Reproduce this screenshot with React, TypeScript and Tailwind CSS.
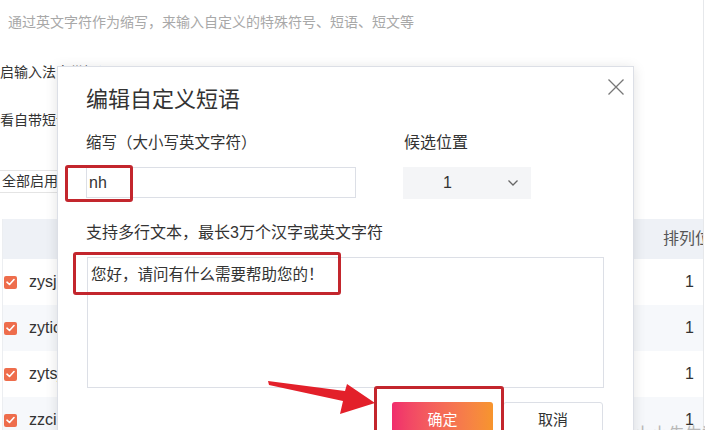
import React from 'react';

const rows = ['zysj', 'zytic', 'zytsj', 'zzci'];

const Check = () => (
  <span className="flex h-[13px] w-[13px] items-center justify-center rounded-[2px] bg-[#ee6d4c]">
    <svg width="9" height="8" viewBox="0 0 9 8" fill="none">
      <path d="M1 4.2 L3.5 6.5 L8 1.5" stroke="white" strokeWidth="1.6" strokeLinecap="round" strokeLinejoin="round" />
    </svg>
  </span>
);

export default function App() {
  return (
    <div
      className="relative h-[430px] w-[705px] overflow-hidden bg-white text-[#333]"
      style={{ fontFamily: '"Liberation Sans", "Noto Sans CJK SC", sans-serif' }}
    >
      {/* Page behind the dialog */}
      <div className="flex h-full w-[704px] flex-col border-r border-[#e6e8eb]">
        <p className="pl-[8px] pt-[13px] text-[14px] leading-[18px] text-[#a8a8a8]">
          通过英文字符作为缩写，来输入自定义的特殊符号、短语、短文等
        </p>
        <p className="mt-[31px] text-[14px] leading-[20px]">启输入法自带短语</p>
        <p className="mt-[28px] text-[14px] leading-[20px]">看自带短语</p>

        <div className="mt-[40px] flex h-[29px] w-[300px] items-center border-y border-[#e4e4e4] pl-[2px] text-[14px]">
          全部启用
        </div>

        {/* Table */}
        <div className="mt-[26px] ml-[2px] flex flex-col border-l border-[#eceef1]">
          <div className="flex h-[40px] items-center bg-[#eef1f6]">
            <div className="flex-1" />
            <div className="w-[40px] overflow-hidden whitespace-nowrap text-[16px] text-[#555]">排列位</div>
          </div>
          {rows.map((r, i) => (
            <div
              key={r}
              className={`flex h-[46px] items-center ${i % 2 === 1 ? 'bg-[#f6f8fb]' : 'bg-white'}`}
            >
              <div className="pl-[1px]">
                <Check />
              </div>
              <span className="ml-[12px] text-[16px]">{r}</span>
              <div className="flex-1" />
              <span className="pr-[9px] text-[16px]">1</span>
            </div>
          ))}
        </div>
      </div>

      {/* Watermark */}
      <div className="absolute left-[578px] top-[422px] whitespace-nowrap text-[17px] text-[#b8b8b8]">
        头条 @小小先生数码
      </div>

      {/* Dialog */}
      <div className="absolute left-[57px] top-[66px] h-[380px] w-[577px] border border-[#dcdfe6] bg-white shadow-[0_2px_12px_rgba(0,0,0,0.12)]">
        <button className="absolute right-[8px] top-[11px] text-[#777]">
          <svg width="18" height="18" viewBox="0 0 18 18" fill="none">
            <path d="M1.5 1.5 L16.5 16.5 M16.5 1.5 L1.5 16.5" stroke="currentColor" strokeWidth="1.3" />
          </svg>
        </button>

        <div className="flex flex-col pl-[28px] pr-[30px] pt-[17px]">
          <h2 className="text-[22px] leading-[32px] text-[#333]">编辑自定义短语</h2>

          <div className="mt-[16px] flex">
            <div className="flex w-[270px] flex-col">
              <label className="text-[15.5px] leading-[22px]">缩写（大小写英文字符）</label>
              <div className="mt-[13px] flex h-[31px] items-center border border-[#dcdfe6] pl-[2px] text-[16px]">
                nh
              </div>
            </div>
            <div className="ml-[47px] flex w-[128px] flex-col">
              <label className="pl-[1px] text-[16px] leading-[22px]">候选位置</label>
              <div className="mt-[13px] flex h-[32px] items-center bg-[#f4f5f7]">
                <span className="ml-[40px] text-[16px]">1</span>
                <svg className="ml-[55px]" width="12" height="8" viewBox="0 0 12 8" fill="none">
                  <path d="M1.5 1.5 L6 6 L10.5 1.5" stroke="#666" strokeWidth="1.3" />
                </svg>
              </div>
            </div>
          </div>

          <label className="mt-[23px] text-[16px] leading-[22px]">支持多行文本，最长3万个汉字或英文字符</label>
          <div className="ml-[1px] mt-[13px] h-[131px] w-[517px] border border-[#dcdfe6] pl-[3px] pt-[6px] text-[15.5px] leading-[22px]">
            您好，请问有什么需要帮助您的！
          </div>

          <div className="mt-[14px] flex justify-end gap-[10px]">
            <button className="h-[36px] w-[101px] rounded-[3px] bg-gradient-to-r from-[#f02c6c] to-[#f7952c] text-[15px] text-white">
              确定
            </button>
            <button className="h-[36px] w-[100px] rounded-[3px] border border-[#dcdfe6] bg-white text-[15px] text-[#333]">
              取消
            </button>
          </div>
        </div>

        {/* Red annotation boxes */}
        <div className="absolute left-[7px] top-[98px] h-[37px] w-[68px] rounded-[3px] border-[3px] border-[#c3262d]" />
        <div className="absolute left-[15px] top-[185px] h-[43px] w-[268px] rounded-[3px] border-[3px] border-[#c3262d]" />
        <div className="absolute left-[316px] top-[319px] h-[70px] w-[130px] rounded-[3px] border-[3px] border-[#c3262d]" />
      </div>

      {/* Red arrow */}
      <svg className="pointer-events-none absolute left-0 top-0" width="705" height="430" viewBox="0 0 705 430">
        <polygon
          points="268,381 345,391 347,384 375,403 340,414 343,401 269,385"
          fill="#e3202a"
        />
      </svg>
    </div>
  );
}
